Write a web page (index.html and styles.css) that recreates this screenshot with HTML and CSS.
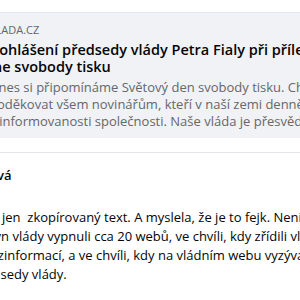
FILE: index.html
```html
<!DOCTYPE html>
<html lang="cs">
<head>
    <meta charset="UTF-8">
    <title>Sdílený odkaz</title>
    <link rel="stylesheet" href="styles.css">
</head>
<body>
    <div class="feed">
        <div class="link-card">
            <div class="domain">VLADA.CZ</div>
            <div class="title">Prohlášení předsedy vlády Petra Fialy při příležitosti Světového<br>dne svobody tisku</div>
            <div class="desc">Dnes si připomínáme Světový den svobody tisku. Chci<br>poděkovat všem novinářům, kteří v naší zemi denně přispívají<br>k informovanosti společnosti. Naše vláda je přesvědčena</div>
        </div>

        <div class="comment">
            <div class="author">Jana Orlová</div>
            <div class="text">Je to jen&nbsp; zkopírovaný text. A myslela, že je to fejk. Není<br>pokyn vlády vypnuli cca 20 webů, ve chvíli, kdy zřídili vládního zmocněnce<br>a dezinformací, a ve chvíli, kdy na vládním webu vyzývá<br>předsedy vlády.</div>
        </div>
    </div>
</body>
</html>
```

FILE: styles.css
```css
body {
    margin: 0;
    width: 300px;
    height: 300px;
    overflow: hidden;
    background-color: #ffffff;
    font-family: "Open Sans", "Noto Sans", sans-serif;
    color: #050505;
}

.feed {
    padding-top: 12px;
    white-space: nowrap;
}

.link-card {
    margin-left: -11px;
    background-color: #f0f2f5;
    border-top: 1px solid #e4e6eb;
    padding: 10px 0 8px 0;
}

.domain {
    font-size: 11px;
    line-height: 14px;
    color: #65676b;
    text-transform: uppercase;
}

.title {
    margin-top: 4px;
    margin-left: -5px;
    font-size: 14.5px;
    font-weight: 600;
    line-height: 17px;
}

.desc {
    margin-top: 4px;
    font-size: 13px;
    line-height: 17px;
    color: #65676b;
}

.comment {
    margin-top: 14px;
    margin-left: -28px;
    border-top: 1px solid #e4e6eb;
    padding-top: 13px;
}

.author {
    margin-left: -33px;
    font-size: 13px;
    font-weight: 600;
    line-height: 18px;
}

.text {
    margin-top: 24px;
    font-size: 13px;
    line-height: 19px;
}
```
